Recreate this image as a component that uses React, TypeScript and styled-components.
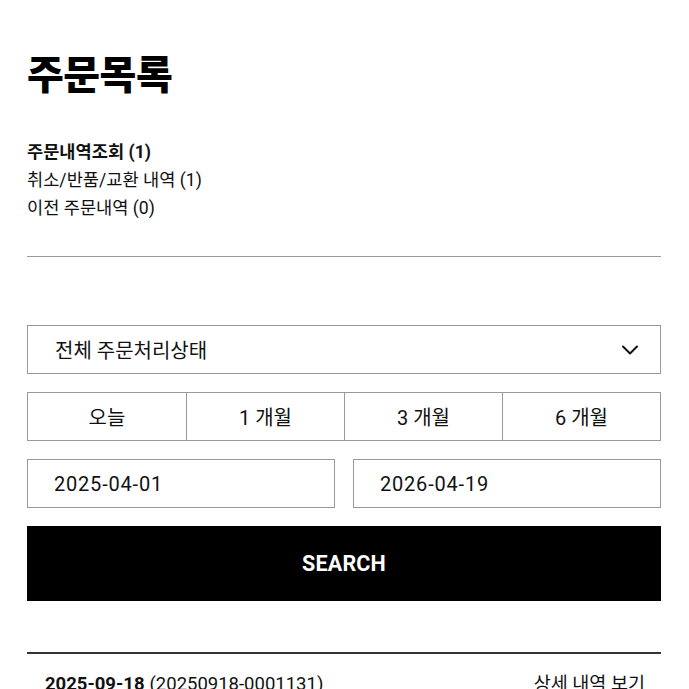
import styled, { createGlobalStyle } from 'styled-components'

const GlobalStyle = createGlobalStyle`
  html, body {
    margin: 0;
    padding: 0;
    background: #fff;
  }
  body {
    font-family: Roboto, "Noto Sans CJK KR", sans-serif;
    color: #111;
  }
  * {
    box-sizing: border-box;
  }
`

const Page = styled.div`
  padding: 52px 28px 0 27px;
`

const Title = styled.h1`
  margin: 0;
  font-size: 40px;
  line-height: 48px;
  font-weight: 900;
  color: #000;
  letter-spacing: -0.5px;
`

const TabList = styled.ul`
  list-style: none;
  margin: 38px 0 0;
  padding: 0;
`

const TabItem = styled.li<{ $active?: boolean }>`
  font-size: 17.6px;
  line-height: 28px;
  font-weight: ${p => (p.$active ? 700 : 400)};
  color: #111;
`

const Divider = styled.hr<{ $dark?: boolean }>`
  margin: 0;
  border: none;
  height: ${p => (p.$dark ? '2px' : '1px')};
  background: ${p => (p.$dark ? '#333' : '#999')};
`

const DividerWrap = styled.div`
  margin-top: 34px;
`

const Filters = styled.div`
  display: flex;
  flex-direction: column;
  gap: 18px;
  margin-top: 68px;
`

const SelectBox = styled.div`
  height: 49px;
  border: 1px solid #999;
  display: flex;
  align-items: center;
  justify-content: space-between;
  padding: 0 18px 0 27px;
  font-size: 20px;
  color: #111;
`

const PeriodGroup = styled.div`
  display: grid;
  grid-template-columns: repeat(4, 1fr);
  height: 49px;
  border: 1px solid #999;
`

const PeriodButton = styled.button`
  border: none;
  border-left: 1px solid #999;
  background: #fff;
  font-family: inherit;
  font-size: 20px;
  color: #111;
  padding: 0;

  &:first-child {
    border-left: none;
  }
`

const DateRow = styled.div`
  display: grid;
  grid-template-columns: 1fr 1fr;
  gap: 18px;
`

const DateField = styled.div`
  height: 49px;
  border: 1px solid #999;
  display: flex;
  align-items: center;
  padding-left: 26px;
  font-size: 20px;
  letter-spacing: 0.8px;
  color: #111;
`

const SearchButton = styled.button`
  height: 75px;
  border: none;
  background: #000;
  color: #fff;
  font-family: Roboto, sans-serif;
  font-size: 21.5px;
  font-weight: 700;
  letter-spacing: 0.2px;
`

const OrderSection = styled.div`
  margin-top: 51px;
`

const OrderHeader = styled.div`
  display: flex;
  justify-content: space-between;
  align-items: center;
  padding: 18px 16px 0 18px;
  font-size: 18.5px;
  line-height: 24px;
  color: #111;
`

const OrderDate = styled.span`
  font-weight: 700;
  margin-right: 5px;
`

const DetailLink = styled.a`
  color: #111;
  text-decoration: none;
`

const Chevron = () => (
  <svg width="24" height="24" viewBox="0 0 24 24" fill="none" stroke="#111" strokeWidth="2" strokeLinecap="round" strokeLinejoin="round">
    <path d="M5 8.5l7 7 7-7" />
  </svg>
)

export default function App() {
  const tabs = [
    { label: '주문내역조회 (1)', active: true },
    { label: '취소/반품/교환 내역 (1)' },
    { label: '이전 주문내역 (0)' },
  ]
  const periods = ['오늘', '1 개월', '3 개월', '6 개월']

  return (
    <>
      <GlobalStyle />
      <Page>
        <Title>주문목록</Title>
        <TabList>
          {tabs.map(t => (
            <TabItem key={t.label} $active={t.active}>{t.label}</TabItem>
          ))}
        </TabList>
        <DividerWrap>
          <Divider />
        </DividerWrap>
        <Filters>
          <SelectBox>
            <span>전체 주문처리상태</span>
            <Chevron />
          </SelectBox>
          <PeriodGroup>
            {periods.map(p => (
              <PeriodButton key={p}>{p}</PeriodButton>
            ))}
          </PeriodGroup>
          <DateRow>
            <DateField>2025-04-01</DateField>
            <DateField>2026-04-19</DateField>
          </DateRow>
          <SearchButton>SEARCH</SearchButton>
        </Filters>
        <OrderSection>
          <Divider $dark />
          <OrderHeader>
            <span>
              <OrderDate>2025-09-18</OrderDate>
              <span>(20250918-0001131)</span>
            </span>
            <DetailLink href="#">상세 내역 보기</DetailLink>
          </OrderHeader>
        </OrderSection>
      </Page>
    </>
  )
}
